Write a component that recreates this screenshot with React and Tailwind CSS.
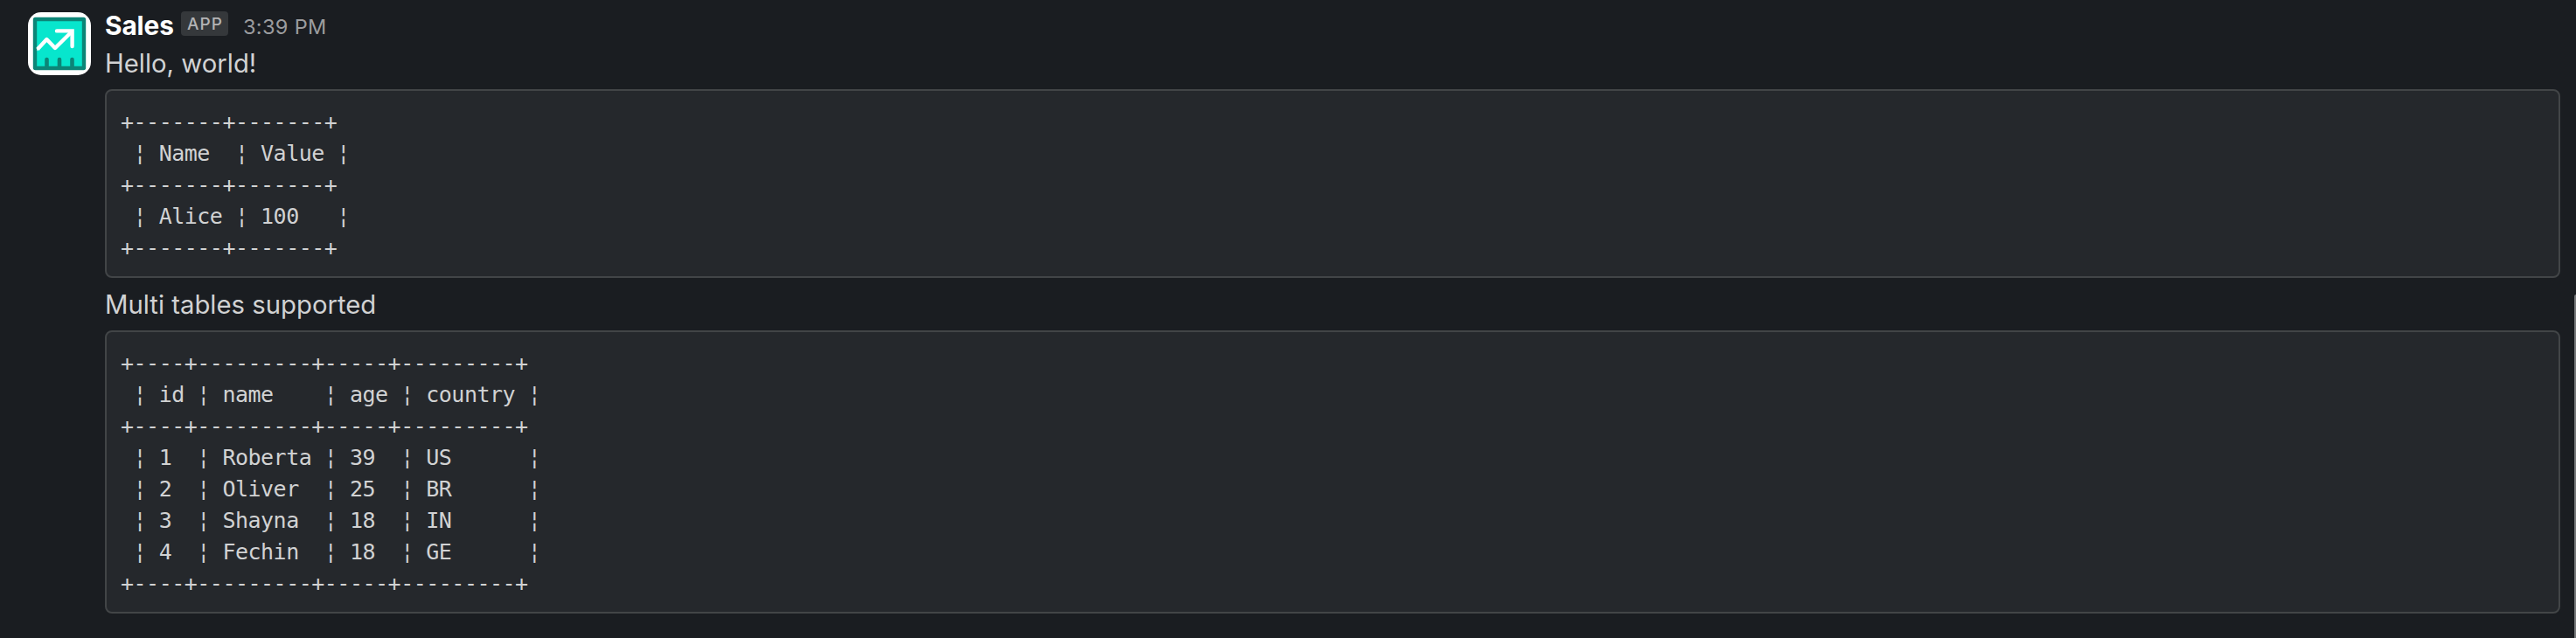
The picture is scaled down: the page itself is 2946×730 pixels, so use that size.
const SALES_TABLE = [
  '+-------+-------+',
  ' ¦ Name  ¦ Value ¦',
  '+-------+-------+',
  ' ¦ Alice ¦ 100   ¦',
  '+-------+-------+',
];

const PEOPLE_TABLE = [
  '+----+---------+-----+---------+',
  ' ¦ id ¦ name    ¦ age ¦ country ¦',
  '+----+---------+-----+---------+',
  ' ¦ 1  ¦ Roberta ¦ 39  ¦ US      ¦',
  ' ¦ 2  ¦ Oliver  ¦ 25  ¦ BR      ¦',
  ' ¦ 3  ¦ Shayna  ¦ 18  ¦ IN      ¦',
  ' ¦ 4  ¦ Fechin  ¦ 18  ¦ GE      ¦',
  '+----+---------+-----+---------+',
];

function Avatar() {
  return (
    <svg viewBox="0 0 72 72" className="mt-2 size-[72px] shrink-0 rounded-[15px] bg-white" fill="none">
      <rect x="8" y="8" width="56" height="56" rx="0.5" fill="#07e6cd" stroke="#0c8577" strokeWidth="4.4" />
      <path d="M21.5 62V54M36 62V54M50.5 62V54" stroke="#0c8577" strokeWidth="4.6" strokeLinecap="round" />
      <path d="M10.2 44.5V39.5L13 41Z" fill="#fff" />
      <path d="M10.8 42.4L21.4 31L31 41L50 22.3" stroke="#fff" strokeWidth="4.4" strokeLinejoin="round" />
      <path d="M33 21.4H50.6V39" stroke="#fff" strokeWidth="4.4" strokeLinecap="round" strokeLinejoin="miter" />
    </svg>
  );
}

function CodeBlock({ lines }) {
  return (
    <pre className="my-2 rounded-lg border-2 border-[#424547] bg-[#25282c] px-4 pt-[18px] pb-3.5 font-['DejaVu_Sans_Mono',monospace] text-[25px] leading-9 tracking-[-0.5px] text-[#d1d2d3]">
      {lines.join('\n')}
    </pre>
  );
}

function Message({ children }) {
  return <p className="h-11 pt-px text-[29.3px] leading-[44px]">{children}</p>;
}

export default function App() {
  return (
    <div className="flex h-[730px] w-full overflow-hidden bg-[#1a1d21] font-[Inter,sans-serif] text-[#d1d2d3]">
      <div className="flex min-w-0 flex-1 gap-4 pt-1.5 pr-4 pl-8">
        <Avatar />
        <div className="min-w-0 flex-1">
          <div className="flex h-11 items-start">
            <span className="w-[79px] pt-px text-[29.8px] leading-[44px] font-bold tracking-[-0.1px] text-white">Sales</span>
            <span className="mt-[7px] ml-2 flex h-7 w-[54px] items-center justify-center rounded bg-[#35383b] pt-[2px] pl-px text-[19px] font-medium tracking-[1px] text-[#b3b3b5]">
              APP
            </span>
            <span className="ml-[17px] pt-[3px] text-[23.5px] leading-[44px] tracking-[0.35px] text-[#9b9c9e]">3:39 PM</span>
          </div>
          <Message>Hello, world!</Message>
          <CodeBlock lines={SALES_TABLE} />
          <Message>Multi tables supported</Message>
          <CodeBlock lines={PEOPLE_TABLE} />
        </div>
      </div>
      <div className="flex w-0.5 shrink-0 flex-col">
        <div className="mt-[337px] flex-1 rounded-tl-sm bg-[#77797b]" />
      </div>
    </div>
  );
}
